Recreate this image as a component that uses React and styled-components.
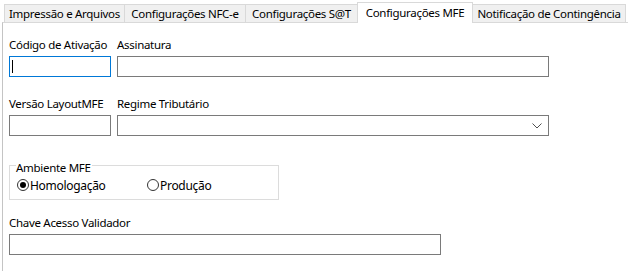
import React from 'react';
import styled, { createGlobalStyle } from 'styled-components';

const GlobalStyle = createGlobalStyle`
	html, body {
		margin: 0;
		padding: 0;
		background: #ffffff;
	}
	body {
		font-family: 'Noto Sans', 'Open Sans', sans-serif;
		font-size: 11.5px;
		letter-spacing: -0.3px;
		color: #000000;
	}
`;

const tabs = [
	{ label: 'Impressão e Arquivos', width: 121 },
	{ label: 'Configurações NFC-e', width: 122 },
	{ label: 'Configurações S@T', width: 113 },
	{ label: 'Configurações MFE', width: 116, active: true },
	{ label: 'Notificação de Contingência', width: 154 },
];

const App = () => {
	return (
		<>
			<GlobalStyle />
			<Window>
				<TabStrip>
					{tabs.map((t) => (
						<Tab key={t.label} $w={t.width} $active={t.active}>
							{t.label}
						</Tab>
					))}
				</TabStrip>
				<Panel>
					<Row>
						<Field $w={102}>
							<Label>Código de Ativação</Label>
							<TextBox $focused>
								<Caret />
							</TextBox>
						</Field>
						<Field $w={432}>
							<Label>Assinatura</Label>
							<TextBox />
						</Field>
					</Row>

					<Row $top={18}>
						<Field $w={102}>
							<Label>Versão LayoutMFE</Label>
							<TextBox />
						</Field>
						<Field $w={432}>
							<Label>Regime Tributário</Label>
							<TextBox>
								<Chevron width='10' height='6' viewBox='0 0 10 6'>
									<path d='M0.5 0.5 L5 5 L9.5 0.5' fill='none' stroke='#505050' strokeWidth='1' />
								</Chevron>
							</TextBox>
						</Field>
					</Row>

					<Group>
						<Legend>Ambiente MFE</Legend>
						<RadioRow>
							<RadioOption $w={130}>
								<RadioCircle $checked />
								Homologação
							</RadioOption>
							<RadioOption>
								<RadioCircle />
								Produção
							</RadioOption>
						</RadioRow>
					</Group>

					<Row $top={14}>
						<Field $w={432}>
							<Label>Chave Acesso Validador</Label>
							<TextBox />
						</Field>
					</Row>
				</Panel>
			</Window>
		</>
	);
};

const Window = styled.div`
	width: 628px;
	height: 271px;
	overflow: hidden;
	background: #ffffff;
`;

const TabStrip = styled.div`
	display: flex;
	align-items: flex-end;
	height: 22px;
	padding-left: 4px;
	position: relative;
	z-index: 1;
`;

const Tab = styled.div`
	box-sizing: border-box;
	width: ${(p) => p.$w}px;
	height: ${(p) => (p.$active ? 21 : 18)}px;
	margin-bottom: ${(p) => (p.$active ? -1 : 0)}px;
	margin-left: -1px;
	display: flex;
	align-items: center;
	justify-content: center;
	padding-bottom: ${(p) => (p.$active ? 2 : 0)}px;
	background: ${(p) => (p.$active ? '#ffffff' : '#f0f0f0')};
	border: 1px solid #d9d9d9;
	border-bottom: none;
	white-space: nowrap;
	position: relative;
	z-index: ${(p) => (p.$active ? 2 : 1)};
	&:first-child {
		margin-left: 0;
	}
`;

const Panel = styled.div`
	margin-left: 2px;
	height: 249px;
	box-sizing: border-box;
	border-top: 1px solid #d9d9d9;
	border-left: 1px solid #c4c4c4;
	padding: 13px 0 0 6px;
`;

const Row = styled.div`
	display: flex;
	gap: 6px;
	margin-top: ${(p) => p.$top || 0}px;
`;

const Field = styled.div`
	display: flex;
	flex-direction: column;
	gap: 2px;
	width: ${(p) => p.$w}px;
`;

const Label = styled.div`
	height: 18px;
	line-height: 18px;
	white-space: nowrap;
`;

const TextBox = styled.div`
	box-sizing: border-box;
	width: 100%;
	height: 21px;
	border: 1px solid ${(p) => (p.$focused ? '#0078d7' : '#7a7a7a')};
	background: #ffffff;
	display: flex;
	align-items: center;
	padding: 0 5px 0 2px;
`;

const Caret = styled.span`
	width: 1px;
	height: 13px;
	background: #000000;
`;

const Chevron = styled.svg`
	margin-left: auto;
	margin-right: 1px;
	margin-top: 1px;
`;

const Group = styled.fieldset`
	box-sizing: border-box;
	width: 270px;
	margin: 20px 0 0 0;
	padding: 3px 6px 6px 6px;
	border: 1px solid #dcdcdc;
`;

const Legend = styled.legend`
	padding: 6px 1px 0 0;
	line-height: 12px;
`;

const RadioRow = styled.div`
	display: flex;
	align-items: center;
	height: 16px;
`;

const RadioOption = styled.label`
	display: flex;
	align-items: center;
	gap: 1px;
	width: ${(p) => (p.$w ? `${p.$w}px` : 'auto')};
	white-space: nowrap;
	font-size: 12px;
`;

const RadioCircle = styled.span`
	box-sizing: border-box;
	width: 12px;
	height: 12px;
	border-radius: 50%;
	border: 1px solid #333333;
	display: inline-flex;
	align-items: center;
	justify-content: center;
	margin-left: 1px;
	&::after {
		content: '';
		width: 6px;
		height: 6px;
		border-radius: 50%;
		background: #000000;
		display: ${(p) => (p.$checked ? 'block' : 'none')};
	}
`;

export default App;
